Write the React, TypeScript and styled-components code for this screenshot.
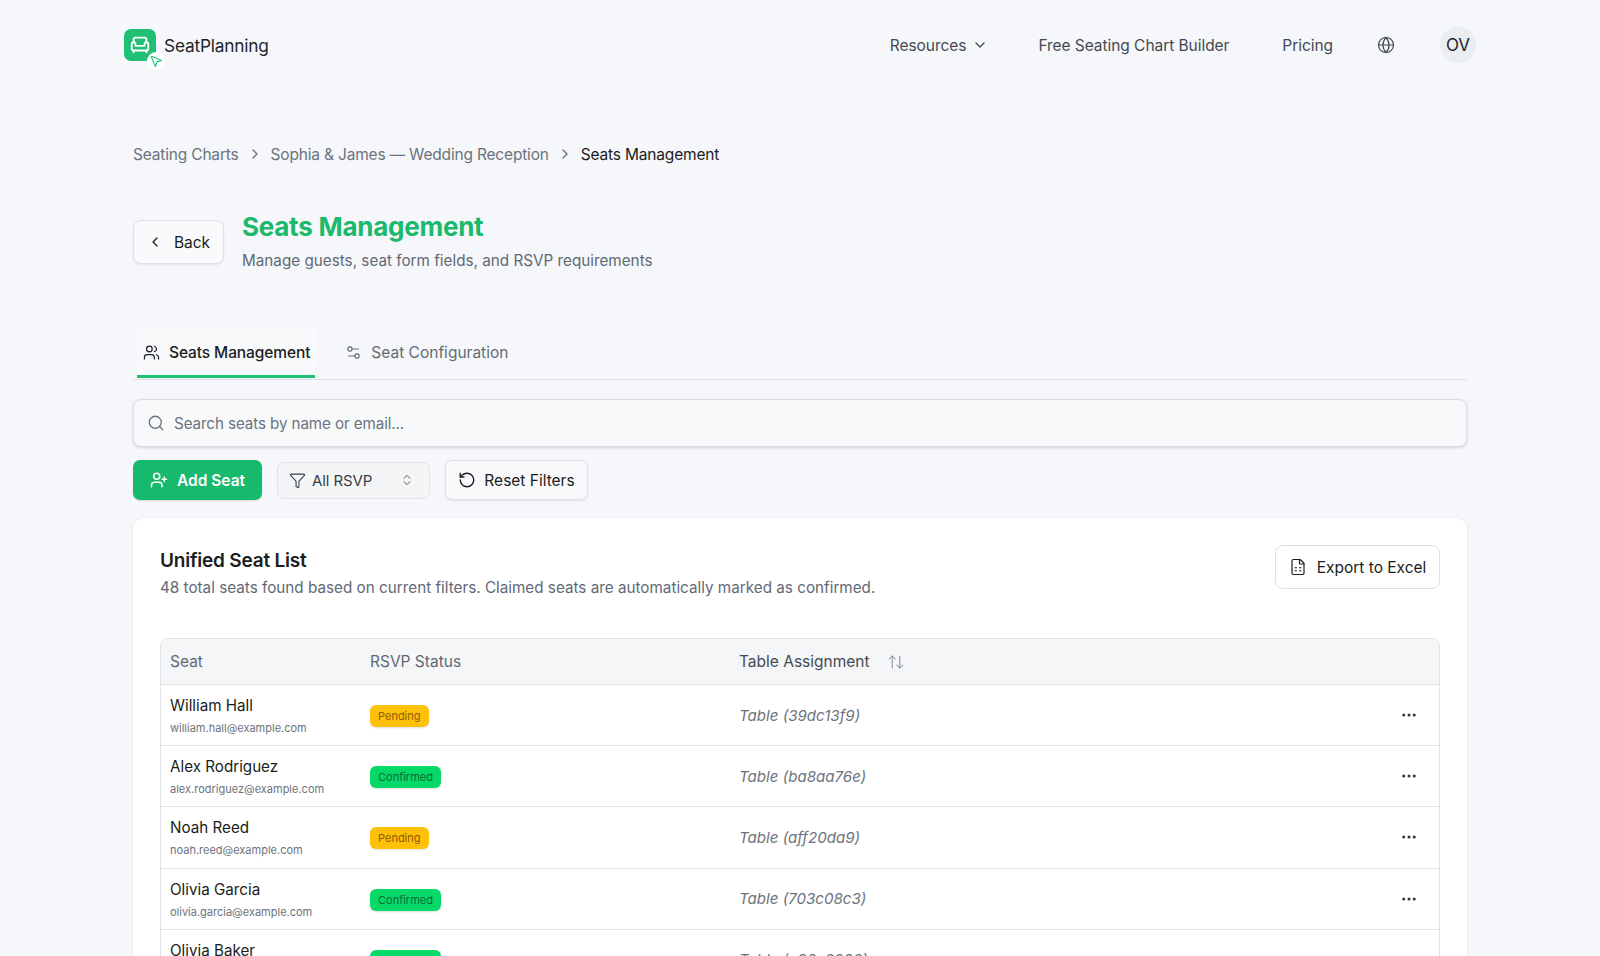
import React from 'react';
import styled, { createGlobalStyle } from 'styled-components';
import {
  Armchair, ArrowUpDown, ChevronDown, ChevronLeft, ChevronRight, ChevronsUpDown, Ellipsis,
  FileSpreadsheet, Funnel, Globe, MousePointer2, RotateCcw, Search, Settings2, UserPlus, Users,
} from 'lucide-react';

const GlobalStyle = createGlobalStyle`
  html, body {
    margin: 0;
    height: 956px;
    overflow: hidden;
    background: #f5f7fa;
    font-family: Inter, "Noto Sans", sans-serif;
    color: #1a1d21;
  }
  * { box-sizing: border-box; }
`;

const Header = styled.header`
  height: 90px;
  margin: 0 124px;
  display: flex;
  align-items: center;
  justify-content: space-between;
`;
const Brand = styled.div`
  display: flex;
  align-items: center;
  gap: 8px;
  font-size: 17.3px;
  letter-spacing: -0.2px;
  color: #22262b;
`;
const LogoBox = styled.div`
  position: relative;
  width: 32px;
  height: 32px;
  border-radius: 7px;
  background: #1fc074;
  color: #fff;
  display: flex;
  align-items: center;
  justify-content: center;
`;
const LogoCursor = styled.span`
  position: absolute;
  right: -9px;
  bottom: -9px;
  width: 18px;
  height: 18px;
  border-radius: 50%;
  background: #fff;
  color: #1fc074;
  display: flex;
  align-items: center;
  justify-content: center;
`;
const Nav = styled.nav`
  display: flex;
  align-items: center;
  font-size: 15.5px;
  letter-spacing: -0.05px;
  color: #444a52;
`;
const NavLink = styled.span<{ gapAfter: number }>`
  display: flex;
  align-items: center;
  gap: 6px;
  margin-right: ${({ gapAfter }) => gapAfter}px;
`;
const Avatar = styled.span`
  width: 36px;
  height: 36px;
  border-radius: 50%;
  background: #eaeef1;
  color: #22262b;
  font-size: 17px;
  display: flex;
  align-items: center;
  justify-content: center;
`;

const Main = styled.main`
  margin: 0 133px;
`;
const Breadcrumb = styled.div`
  margin-top: 52px;
  height: 24px;
  display: flex;
  align-items: center;
  gap: 8px;
  font-size: 15.5px;
  letter-spacing: -0.18px;
  color: #6c737d;
`;
const Crumb = styled.span<{ current?: boolean }>`
  color: ${({ current }) => (current ? '#1a1d21' : '#6c737d')};
`;
const TitleRow = styled.div`
  margin-top: 45px;
  display: flex;
  gap: 18px;
`;
const BackButton = styled.button`
  width: 91px;
  height: 44px;
  margin-top: 9px;
  border: 1px solid #dfe2e6;
  border-radius: 8px;
  background: #f9fafb;
  box-shadow: 0 1px 2px rgba(0, 0, 0, 0.08);
  display: flex;
  align-items: center;
  justify-content: center;
  gap: 11px;
  font: inherit;
  font-size: 15.5px;
  color: #1a1d21;
`;
const TitleBlock = styled.div`
  display: flex;
  flex-direction: column;
`;
const Title = styled.h1`
  margin: 0;
  font-size: 26px;
  line-height: 32px;
  font-weight: 700;
  letter-spacing: -0.25px;
  color: #1cb96c;
`;
const Subtitle = styled.p`
  margin: 7px 0 0;
  font-size: 15.25px;
  line-height: 22px;
  color: #626975;
`;

const Tabs = styled.div`
  margin-top: 56px;
  height: 52px;
  padding-left: 4px;
  border-bottom: 1px solid #dcdfe4;
  display: flex;
  gap: 24px;
`;
const Tab = styled.div<{ active?: boolean }>`
  height: 50px;
  padding: 2px 5px 0 6px;
  display: flex;
  align-items: center;
  gap: 9px;
  font-size: 15.5px;
  letter-spacing: ${({ active }) => (active ? '-0.1px' : '0')};
  font-weight: ${({ active }) => (active ? 500 : 400)};
  color: ${({ active }) => (active ? '#1a1d21' : '#646b75')};
  border-bottom: 3px solid ${({ active }) => (active ? '#1fc074' : 'transparent')};
  background: ${({ active }) => (active ? '#f8f9fb' : 'transparent')};
`;
const SearchBar = styled.div`
  margin-top: 19px;
  height: 48px;
  padding: 0 13px;
  border: 1px solid #d9dde2;
  border-radius: 8px;
  background: #f7f9fb;
  box-shadow: 0 1px 3px rgba(0, 0, 0, 0.14);
  display: flex;
  align-items: center;
  gap: 9px;
  font-size: 15.2px;
  letter-spacing: -0.1px;
  color: #6c737d;
`;
const Actions = styled.div`
  margin-top: 13px;
  height: 40px;
  display: flex;
  align-items: center;
  gap: 15px;
`;
const AddButton = styled.button`
  width: 129px;
  height: 40px;
  border: 0;
  border-radius: 7px;
  background: #17b96d;
  box-shadow: 0 1px 2px rgba(0, 0, 0, 0.12);
  color: #fff;
  display: flex;
  align-items: center;
  justify-content: center;
  gap: 9px;
  font: inherit;
  font-size: 15.5px;
  font-weight: 600;
`;
const SelectBox = styled.div`
  width: 153px;
  height: 37px;
  padding: 0 15px 0 11px;
  border: 1px solid #e0e3e7;
  border-radius: 7px;
  background: #f3f5f7;
  display: flex;
  align-items: center;
  gap: 6px;
  font-size: 15px;
  letter-spacing: -0.1px;
  color: #3a3f46;
`;
const SelectLabel = styled.span`
  flex: 1;
`;
const ResetButton = styled.button`
  width: 143px;
  height: 40px;
  border: 1px solid #dcdfe4;
  border-radius: 7px;
  background: #f8f9fb;
  box-shadow: 0 1px 2px rgba(0, 0, 0, 0.08);
  display: flex;
  align-items: center;
  justify-content: center;
  gap: 8px;
  font: inherit;
  font-size: 15.5px;
  color: #1a1d21;
`;

const Card = styled.section`
  margin-top: 18px;
  padding: 27px;
  height: 600px;
  border-radius: 12px;
  background: #fff;
  box-shadow: 0 1px 4px rgba(0, 0, 0, 0.05);
`;
const CardHead = styled.div`
  display: flex;
  justify-content: space-between;
  align-items: flex-start;
`;
const CardTitle = styled.h2`
  margin: 1px 0 0;
  font-size: 19px;
  line-height: 30px;
  font-weight: 600;
  letter-spacing: -0.2px;
  color: #1a1d21;
`;
const CardSub = styled.p`
  margin: -1px 0 0;
  font-size: 15.25px;
  line-height: 26px;
  color: #626975;
`;
const ExportButton = styled.button`
  width: 165px;
  height: 44px;
  border: 1px solid #dcdfe4;
  border-radius: 8px;
  background: #fff;
  display: flex;
  align-items: center;
  justify-content: center;
  gap: 10px;
  font: inherit;
  font-size: 15.5px;
  color: #1a1d21;
`;
const TableWrap = styled.div`
  margin-top: 37px;
  border: 1px solid #dfe2e6;
  border-radius: 8px;
  overflow: hidden;
`;
const Row = styled.div`
  display: grid;
  grid-template-columns: 200px 369px 1fr 60px;
  align-items: center;
  padding-left: 9px;
`;
const HeadRow = styled(Row)`
  height: 46px;
  background: #f4f6f8;
  border-bottom: 1px solid #dfe2e6;
  font-size: 15.5px;
  color: #626975;
`;
const BodyRow = styled(Row)`
  height: 61.2px;
  border-bottom: 1px solid #dfe2e6;
`;
const SortHead = styled.span`
  display: flex;
  align-items: center;
  gap: 17px;
  color: #444a52;
`;
const SeatCell = styled.div`
  display: flex;
  flex-direction: column;
  padding-top: 2px;
`;
const SeatName = styled.span`
  font-size: 15.2px;
  line-height: 22px;
  color: #1a1d21;
`;
const SeatEmail = styled.span`
  margin-top: 2px;
  font-size: 11px;
  line-height: 18px;
  color: #6c737d;
`;
const Badge = styled.span<{ status: string }>`
  display: inline-flex;
  align-items: center;
  justify-self: start;
  height: 22px;
  margin-top: 2px;
  padding: 0 8px;
  border-radius: 6px;
  font-size: 11px;
  box-shadow: 0 1px 2px rgba(0, 0, 0, 0.12);
  background: ${({ status }) => (status === 'Pending' ? '#ffc107' : '#06d968')};
  color: ${({ status }) => (status === 'Pending' ? '#8f5a06' : '#0b6a38')};
`;
const TableRef = styled.span`
  font-size: 15.1px;
  font-style: italic;
  color: #6c737d;
`;
const RowMenu = styled.span`
  display: flex;
  justify-content: flex-start;
  padding-left: 21px;
  color: #30353b;
`;

const seats = [
  { name: 'William Hall', email: 'william.hall@example.com', status: 'Pending', table: 'Table (39dc13f9)' },
  { name: 'Alex Rodriguez', email: 'alex.rodriguez@example.com', status: 'Confirmed', table: 'Table (ba8aa76e)' },
  { name: 'Noah Reed', email: 'noah.reed@example.com', status: 'Pending', table: 'Table (aff20da9)' },
  { name: 'Olivia Garcia', email: 'olivia.garcia@example.com', status: 'Confirmed', table: 'Table (703c08c3)' },
  { name: 'Olivia Baker', email: 'olivia.baker@example.com', status: 'Confirmed', table: 'Table (a90c3206)' },
];

export default function App() {
  return (
    <>
      <GlobalStyle />
      <Header>
        <Brand>
          <LogoBox>
            <Armchair size={22} strokeWidth={2} />
            <LogoCursor><MousePointer2 size={14} strokeWidth={1.8} /></LogoCursor>
          </LogoBox>
          SeatPlanning
        </Brand>
        <Nav>
          <NavLink gapAfter={50}>Resources <ChevronDown size={16} /></NavLink>
          <NavLink gapAfter={53}>Free Seating Chart Builder</NavLink>
          <NavLink gapAfter={44}>Pricing</NavLink>
          <NavLink gapAfter={45}><Globe size={18} strokeWidth={1.6} /></NavLink>
          <Avatar>OV</Avatar>
        </Nav>
      </Header>
      <Main>
        <Breadcrumb>
          <Crumb>Seating Charts</Crumb>
          <ChevronRight size={16} />
          <Crumb>Sophia &amp; James — Wedding Reception</Crumb>
          <ChevronRight size={16} />
          <Crumb current>Seats Management</Crumb>
        </Breadcrumb>
        <TitleRow>
          <BackButton><ChevronLeft size={16} /> Back</BackButton>
          <TitleBlock>
            <Title>Seats Management</Title>
            <Subtitle>Manage guests, seat form fields, and RSVP requirements</Subtitle>
          </TitleBlock>
        </TitleRow>
        <Tabs>
          <Tab active><Users size={17} strokeWidth={1.7} /> Seats Management</Tab>
          <Tab><Settings2 size={17} strokeWidth={1.6} /> Seat Configuration</Tab>
        </Tabs>
        <SearchBar><Search size={18} strokeWidth={1.7} /> Search seats by name or email...</SearchBar>
        <Actions>
          <AddButton><UserPlus size={18} strokeWidth={2} /> Add Seat</AddButton>
          <SelectBox>
            <Funnel size={17} strokeWidth={1.5} />
            <SelectLabel>All RSVP</SelectLabel>
            <ChevronsUpDown size={14} strokeWidth={1.5} />
          </SelectBox>
          <ResetButton><RotateCcw size={18} strokeWidth={1.8} /> Reset Filters</ResetButton>
        </Actions>
        <Card>
          <CardHead>
            <div>
              <CardTitle>Unified Seat List</CardTitle>
              <CardSub>48 total seats found based on current filters. Claimed seats are automatically marked as confirmed.</CardSub>
            </div>
            <ExportButton><FileSpreadsheet size={18} strokeWidth={1.6} /> Export to Excel</ExportButton>
          </CardHead>
          <TableWrap>
            <HeadRow>
              <span>Seat</span>
              <span>RSVP Status</span>
              <SortHead>Table Assignment <ArrowUpDown size={18} strokeWidth={1.4} color="#8b929b" /></SortHead>
              <span />
            </HeadRow>
            {seats.map((seat) => (
              <BodyRow key={seat.email}>
                <SeatCell>
                  <SeatName>{seat.name}</SeatName>
                  <SeatEmail>{seat.email}</SeatEmail>
                </SeatCell>
                <Badge status={seat.status}>{seat.status}</Badge>
                <TableRef>{seat.table}</TableRef>
                <RowMenu><Ellipsis size={18} /></RowMenu>
              </BodyRow>
            ))}
          </TableWrap>
        </Card>
      </Main>
    </>
  );
}
